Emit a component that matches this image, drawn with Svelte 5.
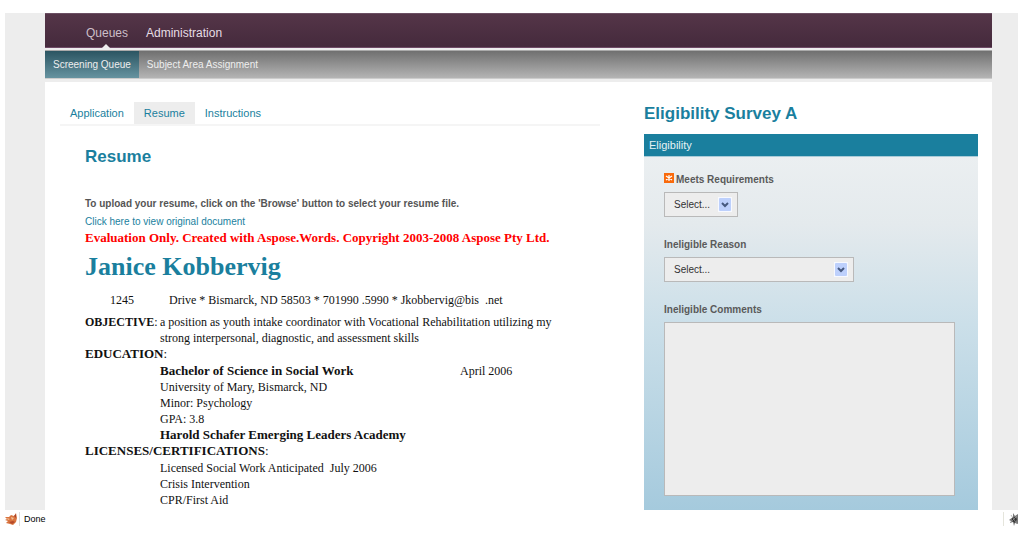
<script>
  const mainNav = ['Queues', 'Administration'];
  const subNav = ['Screening Queue', 'Subject Area Assignment'];
  const tabs = ['Application', 'Resume', 'Instructions'];
</script>

<div class="page">
  <div class="frame">
    <div class="site">
      <nav class="main-nav" aria-label="Main">
        {#each mainNav as item, i}
          <a href="#main-{i}" class:active={i === 0}>{item}</a>
        {/each}
      </nav>
      <nav class="sub-nav" aria-label="Section">
        {#each subNav as item, i}
          <a href="#sub-{i}" class:active={i === 0}>{item}</a>
        {/each}
      </nav>
      <main>
        <section class="document">
          <nav class="tabs" aria-label="Candidate">
            {#each tabs as tab, i}
              <a href="#tab-{i}" class:active={i === 1}>{tab}</a>
            {/each}
          </nav>
          <div class="content">
            <h2>Resume</h2>
            <p class="hint">To upload your resume, click on the 'Browse' button to select your resume file.</p>
            <a class="original" href="#original">Click here to view original document</a>
            <article>
              <p class="notice">Evaluation Only. Created with Aspose.Words. Copyright 2003-2008 Aspose Pty Ltd.</p>
              <h1>Janice Kobbervig</h1>
              <p class="contact"><span class="number">1245</span><span>Drive * Bismarck, ND 58503 * 701990 .5990 * Jkobbervig@bis&nbsp; .net</span></p>
              <div class="objective">
                <h3>OBJECTIVE<span>:</span></h3>
                <p>a position as youth intake coordinator with Vocational Rehabilitation utilizing my strong interpersonal, diagnostic, and assessment skills</p>
              </div>
              <h3 class="wide">EDUCATION<span>:</span></h3>
              <div class="entries">
                <p class="dated"><b>Bachelor of Science in Social Work</b><span>April 2006</span></p>
                <p>University of Mary, Bismarck, ND</p>
                <p>Minor: Psychology</p>
                <p>GPA: 3.8</p>
                <p><b>Harold Schafer Emerging Leaders Academy</b></p>
              </div>
              <h3 class="wide">LICENSES/CERTIFICATIONS<span>:</span></h3>
              <div class="entries">
                <p>Licensed Social Work Anticipated&nbsp; July 2006</p>
                <p>Crisis Intervention</p>
                <p>CPR/First Aid</p>
              </div>
            </article>
          </div>
        </section>
        <section class="survey">
          <h2>Eligibility Survey A</h2>
          <form>
            <h3>Eligibility</h3>
            <div class="fields">
              <div class="field">
                <label for="meets">
                  <svg class="required" viewBox="0 0 10 10" aria-hidden="true">
                    <rect width="10" height="10" fill="#f96a0c" />
                    <path d="M5 2v6M2 3l6 4M8 3L2 7" stroke="#fff" stroke-width="1.2" />
                  </svg>Meets Requirements
                </label>
                <div class="pick short">
                  <select id="meets"><option>Select...</option></select>
                  <svg viewBox="0 0 14 15" aria-hidden="true">
                    <rect width="14" height="15" fill="#f7f9ff" />
                    <rect x="1" y="1" width="12" height="13" rx="1" fill="#bdd0fc" />
                    <path d="M4 6l3 3 3-3" fill="none" stroke="#46597f" stroke-width="2" />
                  </svg>
                </div>
              </div>
              <div class="field">
                <label for="reason">Ineligible Reason</label>
                <div class="pick long">
                  <select id="reason"><option>Select...</option></select>
                  <svg viewBox="0 0 14 15" aria-hidden="true">
                    <rect width="14" height="15" fill="#f7f9ff" />
                    <rect x="1" y="1" width="12" height="13" rx="1" fill="#bdd0fc" />
                    <path d="M4 6l3 3 3-3" fill="none" stroke="#46597f" stroke-width="2" />
                  </svg>
                </div>
              </div>
              <div class="field">
                <label for="comments">Ineligible Comments</label>
                <textarea id="comments"></textarea>
              </div>
            </div>
          </form>
        </section>
      </main>
    </div>
  </div>
  <footer>
    <svg class="fox" viewBox="0 0 12 12" aria-hidden="true">
      <path d="M0 4L4 4 6 2 9 3 11 0 12 5 11 9 8 12 5 11 1 10 3 8 0 7 2 6z" fill="#d9743f" />
      <path d="M2 5l3 1-2 1zM6 4l3 1-2 2z" fill="#f3c29a" />
      <path d="M4 9l4-1 2 1-3 2z" fill="#b4492a" />
      <path d="M9 3l2-2v4z" fill="#a8452c" />
    </svg>
    <span class="status">Done</span>
    <span class="tool">
      <svg viewBox="0 0 9 14" aria-hidden="true">
        <path d="M0 8l4-3V1l2 3 3-2v10l-3-1-1 3-1-4-3 1 1-2z" fill="#777" />
        <path d="M3 6l3-1 2 2-2 4-3-2z" fill="#333" />
        <path d="M2 3l6 9M8 4L1 11" stroke="#999" stroke-width=".7" />
      </svg>
    </span>
  </footer>
</div>

<style>
  :global(body) {
    margin: 0;
    background: #fff;
  }
  .page {
    padding: 13px 6px 0 5px;
    font-family: "Liberation Sans", Arial, sans-serif;
    font-size: 10px;
  }
  h1, h2, h3, p {
    margin: 0;
  }
  a {
    color: #1a7f9e;
    text-decoration: none;
  }
  .frame {
    padding: 0 26px 0 40px;
    background: #ededed;
  }
  .main-nav {
    display: flex;
    gap: 18px;
    box-sizing: border-box;
    height: 35px;
    padding-left: 41px;
    border-top: 1px solid #6b4f63;
    border-bottom: 1px solid #6f4a66;
    background: linear-gradient(#543548, #452a3c);
    font-size: 12px;
    line-height: 38px;
  }
  .main-nav a {
    position: relative;
    color: #e6dde4;
  }
  .main-nav a.active {
    color: #cdbfc9;
  }
  .main-nav a.active::after {
    content: "";
    position: absolute;
    left: 50%;
    bottom: -1px;
    margin-left: -5px;
    border: 4px solid transparent;
    border-top: 0;
    border-bottom-color: #ededed;
  }
  .sub-nav {
    display: flex;
    box-sizing: border-box;
    height: 29px;
    margin: 2px 0 3px;
    border-top: 1px solid #aaa;
    border-bottom: 1px solid #ccc;
    background: linear-gradient(#707070, #b4b4b4);
    line-height: 27px;
  }
  .sub-nav a {
    padding: 0 8px;
    color: #eee;
  }
  .sub-nav a.active {
    background: linear-gradient(#2b5562, #6693a0);
  }
  main {
    display: grid;
    grid-template-columns: minmax(0, 540fr) minmax(0, 334fr);
    gap: 44px;
    padding: 0 14px 0 15px;
    background: #fff;
  }
  .tabs {
    display: flex;
    margin-top: 20px;
    border-bottom: 2px solid #f5f5f5;
    font-size: 11px;
    line-height: 22px;
  }
  .tabs a {
    padding: 0 10px;
  }
  .tabs a.active {
    background: #ededed;
  }
  .content {
    padding: 21px 0 0 25px;
  }
  h2 {
    color: #1a7f9e;
    font-size: 17px;
    line-height: 20px;
  }
  .hint {
    margin-top: 27px;
    color: #555;
    font-weight: bold;
    line-height: 20px;
  }
  .original {
    display: block;
    line-height: 16px;
  }
  article {
    color: #111;
    font-family: "Liberation Serif", "Times New Roman", serif;
    font-size: 12px;
    line-height: 16px;
  }
  .notice {
    color: #f00;
    font-size: 13px;
    font-weight: bold;
  }
  h1 {
    margin-top: 5px;
    color: #1a7f9e;
    font-size: 26px;
    line-height: 32px;
  }
  .contact {
    display: flex;
    gap: 35px;
    margin: 9px 0 6px 25px;
  }
  article h3 {
    font-size: 12px;
    font-weight: bold;
  }
  article h3 span {
    font-weight: normal;
  }
  article .wide, b {
    font-size: 13px;
  }
  .objective {
    display: grid;
    grid-template-columns: 75px minmax(0, 400px);
  }
  .entries {
    padding: 1px 0 0 75px;
  }
  .dated {
    display: flex;
  }
  .dated b {
    flex: 0 0 300px;
  }
  .survey h2 {
    margin-top: 22px;
  }
  form {
    margin-top: 10px;
    background: linear-gradient(#ebeff1 22px, #e4eaed 90px, #cbdfe9 190px, #a5cadd);
  }
  form h3 {
    padding-left: 5px;
    border-bottom: 1px solid #a9cbd8;
    background: #1a7f9e;
    color: #e6f2f5;
    font-size: 11px;
    font-weight: normal;
    line-height: 22px;
  }
  .fields {
    display: grid;
    gap: 20px;
    padding: 15px 23px 14px 20px;
  }
  .field {
    display: grid;
    gap: 4px;
  }
  label {
    color: #5a5a5a;
    font-weight: bold;
    line-height: 16px;
  }
  .required {
    width: 10px;
    height: 10px;
    margin-right: 2px;
  }
  .pick {
    position: relative;
  }
  .short {
    width: 74px;
  }
  .long {
    width: 190px;
  }
  select, textarea {
    display: block;
    box-sizing: border-box;
    width: 100%;
    margin: 0;
    border: 1px solid #b9b9b9;
    border-radius: 0;
    background: #ededed;
    color: #333;
    font: inherit;
  }
  select {
    height: 25px;
    padding: 0 9px;
    appearance: none;
  }
  .pick svg {
    position: absolute;
    top: 5px;
    right: 6px;
    width: 14px;
    height: 15px;
    pointer-events: none;
  }
  textarea {
    height: 174px;
    resize: none;
  }
  footer {
    display: flex;
    align-items: center;
    height: 18px;
  }
  .fox {
    width: 12px;
    height: 12px;
  }
  .status {
    margin-left: 2px;
    padding-left: 4px;
    border-left: 1px solid #ddd;
    font-size: 9px;
    line-height: 14px;
  }
  .tool {
    display: flex;
    margin-left: auto;
    padding-left: 5px;
    border-left: 1px solid #e5e5dc;
  }
  .tool svg {
    width: 9px;
    height: 14px;
  }
</style>
